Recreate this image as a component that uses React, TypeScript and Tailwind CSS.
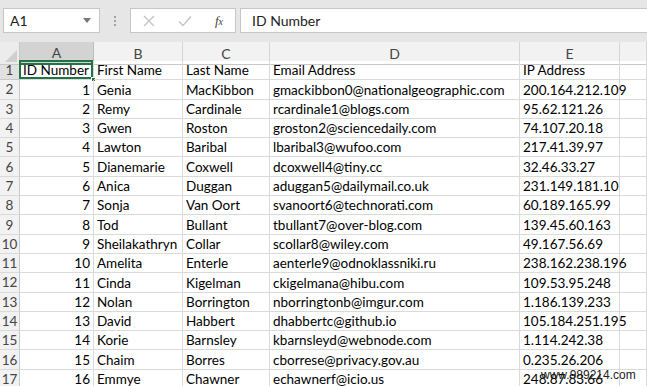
import React from 'react';

const rows: [number, string, string, string, string][] = [
  [1, 'Genia', 'MacKibbon', 'gmackibbon0@nationalgeographic.com', '200.164.212.109'],
  [2, 'Remy', 'Cardinale', 'rcardinale1@blogs.com', '95.62.121.26'],
  [3, 'Gwen', 'Roston', 'groston2@sciencedaily.com', '74.107.20.18'],
  [4, 'Lawton', 'Baribal', 'lbaribal3@wufoo.com', '217.41.39.97'],
  [5, 'Dianemarie', 'Coxwell', 'dcoxwell4@tiny.cc', '32.46.33.27'],
  [6, 'Anica', 'Duggan', 'aduggan5@dailymail.co.uk', '231.149.181.10'],
  [7, 'Sonja', 'Van Oort', 'svanoort6@technorati.com', '60.189.165.99'],
  [8, 'Tod', 'Bullant', 'tbullant7@over-blog.com', '139.45.60.163'],
  [9, 'Sheilakathryn', 'Collar', 'scollar8@wiley.com', '49.167.56.69'],
  [10, 'Amelita', 'Enterle', 'aenterle9@odnoklassniki.ru', '238.162.238.196'],
  [11, 'Cinda', 'Kigelman', 'ckigelmana@hibu.com', '109.53.95.248'],
  [12, 'Nolan', 'Borrington', 'nborringtonb@imgur.com', '1.186.139.233'],
  [13, 'David', 'Habbert', 'dhabbertc@github.io', '105.184.251.195'],
  [14, 'Korie', 'Barnsley', 'kbarnsleyd@webnode.com', '1.114.242.38'],
  [15, 'Chaim', 'Borres', 'cborrese@privacy.gov.au', '0.235.26.206'],
  [16, 'Emmye', 'Chawner', 'echawnerf@icio.us', '248.87.83.66'],
];

const cols = ['A', 'B', 'C', 'D', 'E', ''];
const gridCols = 'grid grid-cols-[20px_74px_89px_87px_250px_100px_1fr]';

function Cell({ children, right, first }: { children?: React.ReactNode; right?: boolean; first?: boolean }) {
  return (
    <div
      className={`relative h-full border-r border-b border-[#dadada] px-[3px] flex items-end pb-[1px] whitespace-nowrap ${
        right ? 'justify-end' : ''
      }`}
    >
      {children}
      {first && (
        <>
          <div className="absolute -left-[1px] -top-[1px] right-0 bottom-0 border-2 border-[#217346] pointer-events-none" />
          <div className="absolute -right-[3px] -bottom-[3px] w-[5px] h-[5px] bg-[#217346] border border-white" />
        </>
      )}
    </div>
  );
}

export default function App() {
  const header = ['ID Number', 'First Name', 'Last Name', 'Email Address', 'IP Address'];
  return (
    <div className="w-[647px] h-[386px] overflow-hidden bg-white relative" style={{ fontFamily: 'Lato, "Open Sans", sans-serif' }}>
      {/* formula bar */}
      <div className="h-[42px] bg-[#e6e6e6] flex items-start pt-[8px] pl-[3px]">
        <div className="w-[97px] h-[25px] bg-white border border-[#c6c6c6] flex items-center justify-between pl-[6px] pr-[8px] text-[14px] text-[#222]">
          <span>A1</span>
          <svg width="8" height="5" viewBox="0 0 8 5"><path d="M0 0h8L4 5z" fill="#777" /></svg>
        </div>
        <div className="w-[30px] h-[25px] flex flex-col items-center justify-center gap-[2px]">
          <span className="w-[2px] h-[2px] bg-[#a0a0a0]" />
          <span className="w-[2px] h-[2px] bg-[#a0a0a0]" />
          <span className="w-[2px] h-[2px] bg-[#a0a0a0]" />
        </div>
        <div className="w-[106px] h-[25px] bg-white border border-[#c6c6c6] flex items-center px-[12px] justify-between">
          <svg width="12" height="12" viewBox="0 0 12 12"><path d="M1 1l10 10M11 1L1 11" stroke="#c4c4c4" strokeWidth="1.4" /></svg>
          <svg width="14" height="12" viewBox="0 0 14 12"><path d="M1 6.5l4 4L13 1.5" stroke="#c4c4c4" strokeWidth="1.4" fill="none" /></svg>
          <span className="text-[13px] italic text-[#444]" style={{ fontFamily: '"Liberation Serif", serif' }}>
            f<span className="text-[10px]">x</span>
          </span>
        </div>
        <div className="ml-[4px] flex-1 h-[25px] bg-white border border-[#c6c6c6] border-r-0 flex items-center pl-[11px] text-[14px] text-[#222]">
          ID Number
        </div>
      </div>

      {/* column headers */}
      <div className={`${gridCols} h-[19px] bg-[#f2f2f2] text-[14px] text-[#444]`}>
        <div className="relative border-r border-b border-[#c8c8c8] bg-[#ececec]">
          <svg className="absolute right-[2px] bottom-[2px]" width="12" height="12" viewBox="0 0 12 12"><path d="M12 0v12H0z" fill="#cfcfcf" /></svg>
        </div>
        {cols.map((c, i) => (
          <div
            key={i}
            className={`flex items-center justify-center border-r ${
              i === 0 ? 'bg-[#d3d3d3] border-b-2 border-b-[#217346] border-r-[#bdbdbd]' : 'border-b border-b-[#c8c8c8] border-r-[#d5d5d5]'
            }`}
          >
            {c}
          </div>
        ))}
      </div>

      {/* rows */}
      <div className="text-[13.5px] text-[#000] leading-[16px]">
        <div className={`${gridCols} h-[19.3px]`}>
          <div className="bg-[#e1e1e1] border-r border-b border-[#c8c8c8] text-[#444] flex items-center justify-center">1</div>
          {header.map((h, i) => (
            <Cell key={i} first={i === 0}>{h}</Cell>
          ))}
          <Cell />
        </div>
        {rows.map((r, idx) => (
          <div key={idx} className={`${gridCols} h-[19.3px]`}>
            <div className="bg-[#f2f2f2] border-r border-b border-[#c8c8c8] border-b-[#dadada] text-[#444] flex items-center justify-center">
              {idx + 2}
            </div>
            <Cell right>{r[0]}</Cell>
            <Cell>{r[1]}</Cell>
            <Cell>{r[2]}</Cell>
            <Cell>{r[3]}</Cell>
            <Cell>{r[4]}</Cell>
            <Cell />
          </div>
        ))}
      </div>

      {/* watermark */}
      <div className="absolute left-[541px] top-[368px] text-[12px] leading-[14px] text-[#222]" style={{ fontFamily: '"Liberation Sans", sans-serif' }}>
        www.989214.com
      </div>
    </div>
  );
}
